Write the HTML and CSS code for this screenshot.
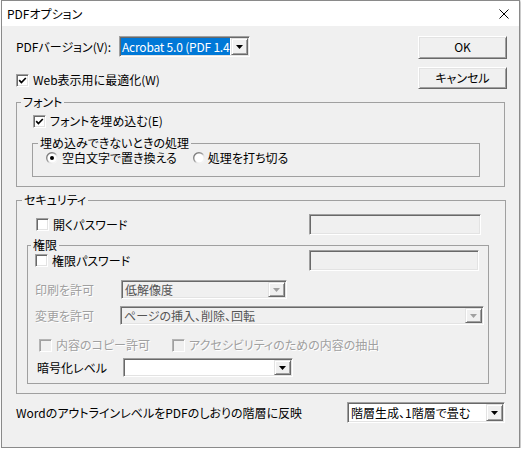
FILE: index.html
```html
<!DOCTYPE html>
<html lang="ja">
<head>
<meta charset="utf-8">
<title>PDFオプション</title>
<link rel="stylesheet" href="styles.css">
</head>
<body>
<div class="window">
  <div class="titlebar">
    <span class="title">PDFオプション</span>
    <svg class="close" width="10" height="10" viewBox="0 0 10 10"><path d="M0.5 0.5L9.5 9.5M9.5 0.5L0.5 9.5" stroke="#000" stroke-width="1" fill="none"/></svg>
  </div>
  <div class="body">
    <div class="top">
      <div class="top-left">
        <div class="version-row">
          <span class="version-label">PDFバージョン(V):</span>
          <div class="combo combo-lg version-combo">
            <span class="combo-text selected">Acrobat 5.0 (PDF 1.4</span>
            <span class="drop"><svg width="7" height="4" viewBox="0 0 7 4"><path d="M0 0H7L3.5 4Z" fill="#000"/></svg></span>
          </div>
        </div>
        <div class="check web-check">
          <span class="box"><svg width="9" height="9" viewBox="0 0 9 9"><path d="M1.2 4.2L3.4 6.5L7.8 2" stroke="#000" stroke-width="1.7" fill="none"/></svg></span>
          <span>Web表示用に最適化(W)</span>
        </div>
      </div>
      <div class="buttons">
        <button class="btn">OK</button>
        <button class="btn">キャンセル</button>
      </div>
    </div>

    <fieldset class="group font-group">
      <legend>フォント</legend>
      <div class="group-body">
        <div class="check">
          <span class="box"><svg width="9" height="9" viewBox="0 0 9 9"><path d="M1.2 4.2L3.4 6.5L7.8 2" stroke="#000" stroke-width="1.7" fill="none"/></svg></span>
          <span>フォントを埋め込む(E)</span>
        </div>
        <fieldset class="group fallback-group">
          <legend>埋め込みできないときの処理</legend>
          <div class="group-body">
            <div class="radio-row">
              <span class="radio-item">
                <svg width="12" height="12" viewBox="0 0 12 12"><defs><linearGradient id="rg1" x1="0" y1="0" x2="1" y2="1"><stop offset="0" stop-color="#696969"/><stop offset="0.45" stop-color="#a0a0a0"/><stop offset="0.6" stop-color="#e3e3e3"/><stop offset="1" stop-color="#fff"/></linearGradient></defs><circle cx="6" cy="6" r="5.3" fill="#fff" stroke="url(#rg1)" stroke-width="1.4"/><circle cx="6" cy="6" r="2" fill="#000"/></svg>
                <span>空白文字で置き換える</span>
              </span>
              <span class="radio-item second">
                <svg width="12" height="12" viewBox="0 0 12 12"><defs><linearGradient id="rg2" x1="0" y1="0" x2="1" y2="1"><stop offset="0" stop-color="#696969"/><stop offset="0.45" stop-color="#a0a0a0"/><stop offset="0.6" stop-color="#e3e3e3"/><stop offset="1" stop-color="#fff"/></linearGradient></defs><circle cx="6" cy="6" r="5.3" fill="#fff" stroke="url(#rg2)" stroke-width="1.4"/></svg>
                <span>処理を打ち切る</span>
              </span>
            </div>
          </div>
        </fieldset>
      </div>
    </fieldset>

    <fieldset class="group security-group">
      <legend>セキュリティ</legend>
      <div class="group-body">
        <div class="open-row">
          <div class="check">
            <span class="box"></span>
            <span>開くパスワード</span>
          </div>
          <span class="textbox open-box"></span>
        </div>
        <fieldset class="group perm-group">
          <legend>権限</legend>
          <div class="group-body">
            <div class="perm-row">
              <div class="check">
                <span class="box"></span>
                <span>権限パスワード</span>
              </div>
              <span class="textbox perm-box"></span>
            </div>
            <div class="select-row print-row">
              <span class="disabled-text print-label">印刷を許可</span>
              <div class="combo combo-sm combo-disabled print-combo">
                <span class="combo-text">低解像度</span>
                <span class="drop"><svg width="7" height="4" viewBox="0 0 7 4"><path d="M0 0H7L3.5 4Z" fill="#a0a0a0"/></svg></span>
              </div>
            </div>
            <div class="select-row change-row">
              <span class="disabled-text change-label">変更を許可</span>
              <div class="combo combo-sm combo-disabled change-combo">
                <span class="combo-text">ページの挿入、削除、回転</span>
                <span class="drop"><svg width="7" height="4" viewBox="0 0 7 4"><path d="M0 0H7L3.5 4Z" fill="#a0a0a0"/></svg></span>
              </div>
            </div>
            <div class="disabled-checks">
              <div class="check copy-check">
                <span class="box box-disabled"></span>
                <span class="disabled-text">内容のコピー許可</span>
              </div>
              <div class="check">
                <span class="box box-disabled"></span>
                <span class="disabled-text">アクセシビリティのための内容の抽出</span>
              </div>
            </div>
            <div class="select-row encrypt-row">
              <span class="encrypt-label">暗号化レベル</span>
              <div class="combo combo-sm encrypt-combo">
                <span class="combo-text"></span>
                <span class="drop"><svg width="7" height="4" viewBox="0 0 7 4"><path d="M0 0H7L3.5 4Z" fill="#000"/></svg></span>
              </div>
            </div>
          </div>
        </fieldset>
      </div>
    </fieldset>

    <div class="word-row">
      <span>WordのアウトラインレベルをPDFのしおりの階層に反映</span>
      <div class="combo combo-lg word-combo">
        <span class="combo-text">階層生成、1階層で畳む</span>
        <span class="drop"><svg width="7" height="4" viewBox="0 0 7 4"><path d="M0 0H7L3.5 4Z" fill="#000"/></svg></span>
      </div>
    </div>
  </div>
</div>
</body>
</html>
```

FILE: styles.css
```css
body {
  margin: 0;
  background: #fff;
  font-family: "Noto Sans CJK JP", "Noto Sans", sans-serif;
  font-size: 12px;
  line-height: 14px;
  color: #000;
  font-feature-settings: "palt";
}

.window {
  box-sizing: border-box;
  width: 519px;
  height: 448px;
  margin-left: 1px;
  border: 1px solid #8a8a8a;
  background: #f0f0f0;
  display: flex;
  flex-direction: column;
  box-shadow: 1px 1px 2px rgba(0, 0, 0, 0.3);
}

.titlebar {
  height: 25px;
  flex: none;
  background: #fff;
  display: flex;
  align-items: center;
  padding: 0 10px 0 5px;
}

.title {
  flex: 1;
}

.close {
  display: block;
}

.body {
  flex: 1;
  padding: 10px 14px 0;
}

/* top area */
.top {
  display: flex;
  justify-content: space-between;
  height: 53px;
}

.version-row {
  display: flex;
  align-items: center;
  height: 21px;
}

.version-label {
  width: 103px;
}

.web-check {
  margin-top: 16px;
}

.buttons {
  display: flex;
  flex-direction: column;
  gap: 8px;
  margin-right: -2px;
}

.btn {
  appearance: none;
  box-sizing: border-box;
  width: 89px;
  height: 23px;
  margin: 0;
  padding: 0;
  font: inherit;
  color: #000;
  background: #f0f0f0;
  border: 1px solid;
  border-color: #fff #696969 #696969 #fff;
  box-shadow: inset 1px 1px 0 #e3e3e3, inset -1px -1px 0 #a0a0a0;
}

/* combo boxes */
.combo {
  box-sizing: border-box;
  display: flex;
  padding: 1px;
  border: 1px solid;
  border-color: #a0a0a0 #fff #fff #a0a0a0;
  box-shadow: inset 1px 1px 0 #696969, inset -1px -1px 0 #e3e3e3;
  background: #fff;
}

.combo-lg {
  height: 21px;
}

.combo-sm {
  height: 19px;
}

.combo-text {
  flex: 1;
  min-width: 0;
  overflow: hidden;
  white-space: nowrap;
  padding-left: 2px;
  line-height: 17px;
}

.combo-sm .combo-text {
  line-height: 15px;
}

.combo-disabled {
  background: #f0f0f0;
}

.combo-disabled .combo-text {
  color: #555;
}

.selected {
  background: #0078d7;
  color: #fff;
  margin-right: 1px;
  padding-left: 1px;
  letter-spacing: -0.2px;
}

.drop {
  box-sizing: border-box;
  flex: none;
  width: 17px;
  display: flex;
  align-items: center;
  justify-content: center;
  background: #f0f0f0;
  border: 1px solid;
  border-color: #e3e3e3 #696969 #696969 #e3e3e3;
  box-shadow: inset 1px 1px 0 #fff, inset -1px -1px 0 #a0a0a0;
}

.drop svg {
  display: block;
}

.version-combo {
  width: 131px;
}

.print-combo {
  width: 166px;
}

.change-combo {
  width: 364px;
}

.encrypt-combo {
  width: 170px;
}

.word-combo {
  width: 158px;
}

/* checkboxes */
.check {
  display: flex;
  align-items: center;
  gap: 4px;
  height: 14px;
}

.box {
  box-sizing: border-box;
  width: 13px;
  height: 13px;
  flex: none;
  background: #fff;
  border: 1px solid;
  border-color: #a0a0a0 #fff #fff #a0a0a0;
  box-shadow: inset 1px 1px 0 #696969, inset -1px -1px 0 #e3e3e3;
  display: flex;
  align-items: center;
  justify-content: center;
}

.box svg {
  display: block;
}

.box-disabled {
  background: #f0f0f0;
  border-color: #b4b4b4 #fff #fff #b4b4b4;
  box-shadow: inset 1px 1px 0 #a0a0a0;
}

.disabled-text {
  color: #a0a0a0;
  text-shadow: 1px 1px 0 #fff;
}

/* group boxes */
.group {
  box-sizing: border-box;
  margin: 0;
  padding: 0;
  border: 1px solid #a0a0a0;
  min-inline-size: 0;
}

.group > legend {
  padding: 0 2px;
  line-height: 12px;
}

.font-group {
  margin-top: 7px;
}

.font-group > legend {
  margin-left: 4px;
}

.font-group > .group-body {
  padding: 6px 0 9px 16px;
}

.fallback-group {
  margin: 9px 0 0 -1px;
  width: 448px;
}

.fallback-group > legend {
  margin-left: 5px;
}

.fallback-group > .group-body {
  padding: 2px 0 11px 13px;
}

.radio-row {
  display: flex;
  align-items: center;
  height: 14px;
}

.radio-item {
  display: flex;
  align-items: center;
  gap: 4px;
}

.radio-item svg {
  display: block;
}

.radio-item.second {
  margin-left: 16px;
  gap: 3px;
}

.security-group {
  margin: 7px -1px 0 0;
}

.security-group > legend {
  margin-left: 5px;
}

.security-group > .group-body {
  padding: 8px 16px 9px 10px;
}

.open-row {
  display: flex;
  align-items: center;
  height: 21px;
  padding: 0 8px 0 9px;
}

.textbox {
  box-sizing: border-box;
  margin-left: auto;
  height: 21px;
  border: 1px solid;
  border-color: #a0a0a0 #fff #fff #a0a0a0;
  box-shadow: inset 1px 1px 0 #696969, inset -1px -1px 0 #e3e3e3;
  background: #f0f0f0;
}

.open-box {
  width: 172px;
}

.perm-group {
  margin-top: 4px;
}

.perm-group > legend {
  margin-left: 3px;
}

.perm-group > .group-body {
  padding: 0 0 6px 7px;
}

.perm-row {
  display: flex;
  align-items: center;
  height: 21px;
  margin-top: -1px;
  padding-right: 9px;
}

.perm-box {
  width: 170px;
}

.select-row {
  display: flex;
  align-items: center;
  height: 19px;
}

.print-row {
  margin-top: 9px;
}

.print-label {
  width: 86px;
}

.change-row {
  margin-top: 7px;
}

.change-label {
  width: 85px;
}

.disabled-checks {
  display: flex;
  align-items: center;
  height: 14px;
  margin-top: 13px;
  padding-left: 4px;
}

.copy-check {
  width: 133px;
}

.encrypt-row {
  margin-top: 6px;
  padding-left: 2px;
}

.encrypt-label {
  width: 86px;
}

.word-row {
  display: flex;
  align-items: center;
  justify-content: space-between;
  height: 21px;
  margin-top: 8px;
}
```
